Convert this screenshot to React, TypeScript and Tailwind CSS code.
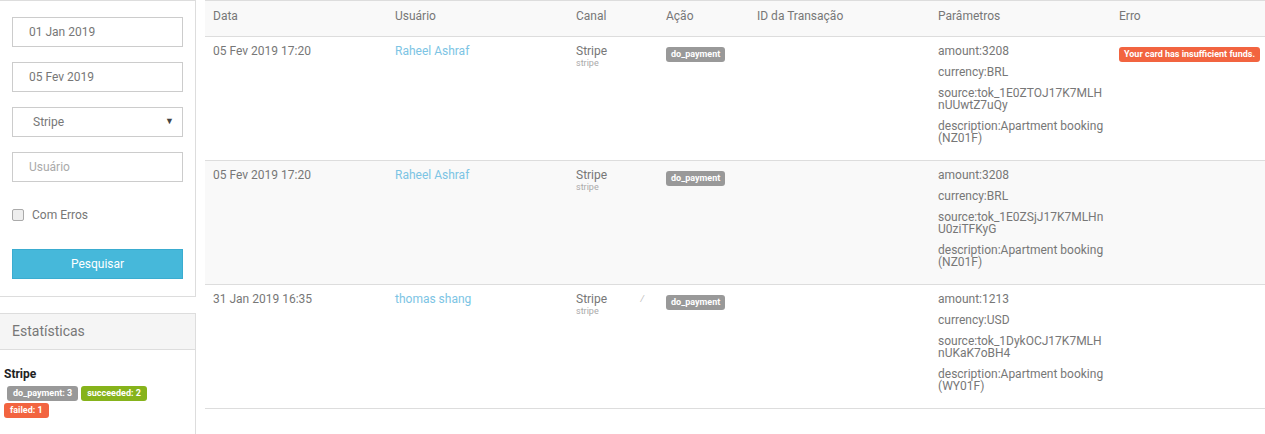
import React from "react";

type Row = {
  date: string;
  user: string;
  params: string[][];
  error?: string;
  mark?: boolean;
};

const rows: Row[] = [
  {
    date: "05 Fev 2019 17:20",
    user: "Raheel Ashraf",
    params: [
      ["amount:3208"],
      ["currency:BRL"],
      ["source:tok_1E0ZTOJ17K7MLH", "nUUwtZ7uQy"],
      ["description:Apartment booking", "(NZ01F)"],
    ],
    error: "Your card has insufficient funds.",
  },
  {
    date: "05 Fev 2019 17:20",
    user: "Raheel Ashraf",
    params: [
      ["amount:3208"],
      ["currency:BRL"],
      ["source:tok_1E0ZSjJ17K7MLHn", "U0ziTFKyG"],
      ["description:Apartment booking", "(NZ01F)"],
    ],
  },
  {
    date: "31 Jan 2019 16:35",
    user: "thomas shang",
    params: [
      ["amount:1213"],
      ["currency:USD"],
      ["source:tok_1DykOCJ17K7MLH", "nUKaK7oBH4"],
      ["description:Apartment booking", "(WY01F)"],
    ],
    mark: true,
  },
];

function Sidebar() {
  return (
    <div className="w-[196px] shrink-0 flex flex-col">
      <div className="border-t border-r border-b border-[#ddd] bg-white px-3 pt-4 h-[297px]">
        <div className="flex flex-col gap-[15px]">
          <div className="h-[30px] border border-[#ccc] pl-4 flex items-center text-[12px] text-[#777]">01 Jan 2019</div>
          <div className="h-[30px] border border-[#ccc] pl-4 flex items-center text-[12px] text-[#777]">05 Fev 2019</div>
          <div className="h-[30px] border border-[#ccc] pl-5 pr-2 flex items-center justify-between text-[12px] text-[#777]">
            <span>Stripe</span>
            <span className="text-[9px] text-[#444]">▼</span>
          </div>
          <div className="h-[30px] border border-[#ccc] pl-4 flex items-center text-[12px] text-[#aaa]">Usuário</div>
        </div>
        <label className="flex items-center gap-2 mt-[21px] h-[24px] text-[12px] text-[#777]">
          <span className="w-[12px] h-[12px] rounded-[2px] border border-[#aaa] bg-[#eee]" />
          Com Erros
        </label>
        <button className="mt-[22px] w-full h-[30px] bg-[#46b8da] border border-[#3aacd0] text-white text-[12px]">
          Pesquisar
        </button>
      </div>
      <div className="mt-[16px] flex-1 border-t border-r border-[#ddd] bg-white">
        <div className="h-[36px] bg-[#f5f5f5] border-b border-[#ddd] px-3 flex items-center text-[14px] text-[#777]">
          Estatísticas
        </div>
        <div className="px-1 pt-[17px]">
          <div className="text-[12px] font-bold text-[#222] leading-[15px]">Stripe</div>
          <div className="w-[150px] flex flex-wrap gap-x-[3px] gap-y-[2px] mt-[4px]">
            <span className="ml-[3px] rounded-[3px] bg-[#999] text-white text-[9px] font-bold px-[6px] h-[15px] leading-[15px]">do_payment: 3</span>
            <span className="rounded-[3px] bg-[#86b31b] text-white text-[9px] font-bold px-[6px] h-[15px] leading-[15px]">succeeded: 2</span>
            <span className="rounded-[3px] bg-[#f26440] text-white text-[9px] font-bold px-[6px] h-[15px] leading-[15px]">failed: 1</span>
          </div>
        </div>
      </div>
    </div>
  );
}

function Table() {
  const cols = ["Data", "Usuário", "Canal", "Ação", "ID da Transação", "Parâmetros", "Erro"];
  return (
    <div className="ml-[9px] w-[1060px] shrink-0">
      <table className="w-[1060px] table-fixed border-collapse text-[12px] text-[#777]">
        <colgroup>
          <col className="w-[182px]" />
          <col className="w-[181px]" />
          <col className="w-[90px]" />
          <col className="w-[91px]" />
          <col className="w-[181px]" />
          <col className="w-[181px]" />
          <col className="w-[154px]" />
        </colgroup>
        <thead>
          <tr className="bg-[#f9f9f9] border-t border-b border-[#ddd]">
            {cols.map((c) => (
              <th key={c} className="px-2 pt-[8px] pb-[13px] leading-[14px] text-left font-normal">
                {c}
              </th>
            ))}
          </tr>
        </thead>
        <tbody>
          {rows.map((r, i) => (
            <tr key={i} className={`border-b border-[#ddd] align-top ${i === 1 ? "bg-[#f9f9f9]" : "bg-white"}`}>
              <td className="px-2 pt-2 leading-[12px]">{r.date}</td>
              <td className="px-2 pt-2 leading-[12px] text-[#7cc4e4]">{r.user}</td>
              <td className="px-2 pt-2 relative">
                <div className="leading-[12px]">Stripe</div>
                <div className="text-[9px] text-[#aaa] leading-[13px]">stripe</div>
                {r.mark && <span className="absolute right-[14px] top-[8px] text-[9px] italic text-[#bbb]">/</span>}
              </td>
              <td className="px-2 pt-[7px]">
                <span className="inline-block rounded-[3px] bg-[#999] text-white text-[9px] font-bold px-[5px] h-[15px] leading-[15px]">
                  do_payment
                </span>
              </td>
              <td className="px-2 pt-2"></td>
              <td className="px-2 pt-2 pb-[7px]">
                {r.params.map((p) => (
                  <div key={p[0]} className="leading-[12px] mb-[9px] whitespace-nowrap">
                    {p.map((l) => (
                      <div key={l}>{l}</div>
                    ))}
                  </div>
                ))}
              </td>
              <td className="px-2 pt-[7px]">
                {r.error && (
                  <span className="inline-block rounded-[3px] bg-[#f26440] text-white text-[9px] font-bold px-[5px] h-[15px] leading-[15px] whitespace-nowrap">
                    {r.error}
                  </span>
                )}
              </td>
            </tr>
          ))}
        </tbody>
      </table>
    </div>
  );
}

export default function App() {
  return (
    <div className="flex items-start w-[1265px] h-[434px] bg-white overflow-hidden" style={{ fontFamily: "Roboto, 'Liberation Sans', sans-serif" }}>
      <div className="self-stretch flex">
        <Sidebar />
      </div>
      <Table />
    </div>
  );
}
